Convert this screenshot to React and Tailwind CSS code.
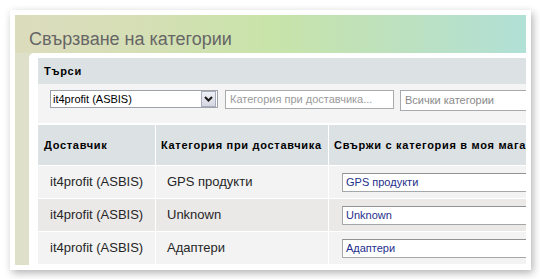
import React from "react";

const rows = [
  { s: "it4profit (ASBIS)", c: "GPS продукти", v: "GPS продукти", bg: "bg-[#f3f3f3]" },
  { s: "it4profit (ASBIS)", c: "Unknown", v: "Unknown", bg: "bg-[#ebe8e8]" },
  { s: "it4profit (ASBIS)", c: "Адаптери", v: "Адаптери", bg: "bg-[#f3f3f3]" },
  { s: "", c: "", v: "", bg: "bg-[#ebe8e8]" },
];

function Chevron() {
  return (
    <svg width="9" height="6" viewBox="0 0 9 6">
      <path d="M1 1 L4.5 4.5 L8 1" fill="none" stroke="#1a1a1a" strokeWidth="2" />
    </svg>
  );
}

export default function App() {
  return (
    <div className="w-[540px] h-[279px] bg-white overflow-hidden pt-[10px] pl-[10px] font-['Liberation_Sans',Arial,sans-serif]">
      <div className="w-[521px] h-[260px] bg-white p-[5px] shadow-[2px_3px_8px_rgba(0,0,0,0.3)]">
        <div className="w-full h-full flex flex-col overflow-hidden bg-[linear-gradient(to_right,#dcdcbd_0%,#d5dfb5_25%,#c8e4a9_50%,#bde1bf_75%,#b1e0d6_100%)]">
          <div className="h-[38px] shrink-0 pl-[14px] pt-[15px] text-[18px] leading-[18px] text-[#666666]">
            Свързване на категории
          </div>
          <div className="flex-1 pl-[14px] bg-[#dfe0c9]">
            <div className="h-full bg-white rounded-tl-[5px] pt-[5px] pl-[9px] overflow-hidden">
              <div className="w-[600px] flex flex-col">
                <div className="h-[26px] bg-[#dce1e4] flex items-center pl-[6px] text-[11px] font-bold tracking-[0.7px] text-black">
                  Търси
                </div>
                <div className="h-[39px] bg-[#f4f4f4] flex items-start pt-[6px] pl-[12px] text-[11px]">
                  <div className="w-[168px] h-[18px] bg-white border border-[#9ea3aa] flex items-center">
                    <span className="flex-1 pl-[2px] text-black">it4profit (ASBIS)</span>
                    <div className="w-[15px] h-[16px] mr-[1px] bg-[linear-gradient(#eef0f6,#d4d7e2)] border border-[#a8acbd] flex items-center justify-center">
                      <Chevron />
                    </div>
                  </div>
                  <div className="ml-[7px] w-[169px] h-[19px] bg-white border border-[#a7abad] flex items-center pl-[4px] text-[#9a9a9a]">
                    Категория при доставчика...
                  </div>
                  <div className="ml-[6px] w-[160px] h-[21px] bg-white border border-[#a7abad] flex items-center pl-[4px] text-[#8a8a8a]">
                    Всички категории
                  </div>
                </div>
                <div className="h-[2px]" />
                <div className="h-[40px] flex gap-[1px] text-[11px] font-bold tracking-[0.7px] text-black">
                  <div className="w-[117px] bg-[#dce1e4] flex items-center pl-[6px]">Доставчик</div>
                  <div className="w-[172px] bg-[#dce1e4] flex items-center pl-[5px] whitespace-nowrap">Категория при доставчика</div>
                  <div className="flex-1 bg-[#dce1e4] flex items-center pl-[5px] whitespace-nowrap">Свържи с категория в моя магазин</div>
                </div>
                {rows.map((r, i) => (
                  <div key={i} className="h-[33px] pt-[1px] flex gap-[1px] text-[13px] text-[#262626]">
                    <div className={`w-[117px] ${r.bg} flex items-center pl-[12px]`}>{r.s}</div>
                    <div className={`w-[172px] ${r.bg} flex items-center pl-[11px]`}>{r.c}</div>
                    <div className={`flex-1 ${r.bg} flex items-center pl-[13px]`}>
                      {r.v && (
                        <div className="w-[220px] h-[19px] bg-white border border-[#a4a8ab] border-t-[#8f9396] flex items-center pl-[3px] text-[11px] text-[#1e2f8c]">
                          {r.v}
                        </div>
                      )}
                    </div>
                  </div>
                ))}
              </div>
            </div>
          </div>
        </div>
      </div>
    </div>
  );
}
